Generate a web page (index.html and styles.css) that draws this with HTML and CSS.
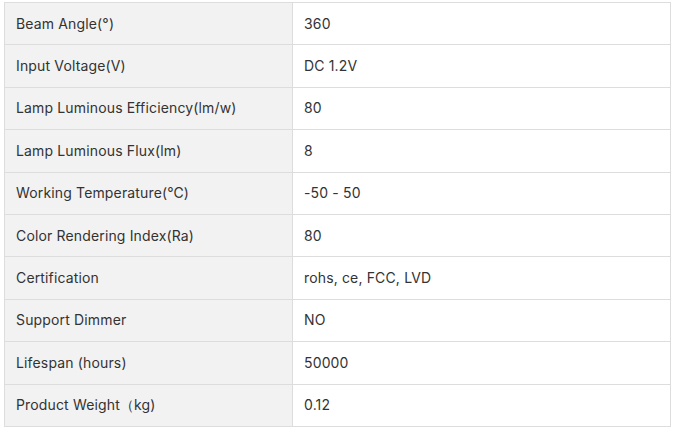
FILE: index.html
```html
<!DOCTYPE html>
<html>
<head>
<meta charset="utf-8">
<link rel="stylesheet" href="styles.css">
</head>
<body>
<div class="wrap">
<table class="spec">
<tbody>
<tr><td class="k">Beam Angle(°)</td><td class="v">360</td></tr>
<tr><td class="k">Input Voltage(V)</td><td class="v">DC 1.2V</td></tr>
<tr><td class="k">Lamp Luminous Efficiency(lm/w)</td><td class="v">80</td></tr>
<tr><td class="k">Lamp Luminous Flux(lm)</td><td class="v">8</td></tr>
<tr><td class="k">Working Temperature(℃)</td><td class="v">-50 - 50</td></tr>
<tr><td class="k">Color Rendering Index(Ra)</td><td class="v">80</td></tr>
<tr><td class="k">Certification</td><td class="v">rohs, ce, FCC, LVD</td></tr>
<tr><td class="k">Support Dimmer</td><td class="v">NO</td></tr>
<tr><td class="k">Lifespan (hours)</td><td class="v">50000</td></tr>
<tr><td class="k">Product Weight（kg)</td><td class="v">0.12</td></tr>
</tbody>
</table>
</div>
</body>
</html>
```
FILE: styles.css
```css
html, body {
  margin: 0;
  padding: 0;
  background: #ffffff;
}
.wrap {
  padding: 2px 5px 0 4px;
}
.spec {
  width: 667px;
  border-collapse: collapse;
  font-family: Inter, "Noto Sans", sans-serif;
  font-size: 14px;
  letter-spacing: 0.15px;
  color: #333333;
}
.spec tr {
  height: 42.4px;
}
.spec td {
  border: 1px solid #dddddd;
  padding: 0 11px;
  vertical-align: middle;
  line-height: 20px;
}
.spec .k {
  width: 265px;
  background: #f2f2f2;
}
.spec .v {
  background: #ffffff;
}
```
